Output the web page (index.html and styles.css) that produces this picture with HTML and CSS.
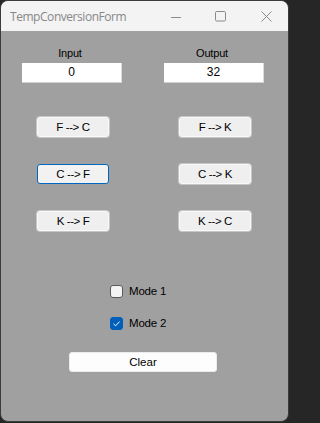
FILE: index.html
```html
<!DOCTYPE html>
<html>
<head>
<meta charset="utf-8">
<title>TempConversionForm</title>
<link rel="stylesheet" href="styles.css">
</head>
<body>
<div class="window">
  <div class="titlebar">
    <span class="title">TempConversionForm</span>
    <div class="caption">
      <svg class="cap-btn" width="46" height="30" viewBox="0 0 46 30"><line x1="21" y1="16.5" x2="31" y2="16.5" stroke="#8a8a8a" stroke-width="1"/></svg>
      <svg class="cap-btn" width="46" height="30" viewBox="0 0 46 30"><rect x="19.5" y="10.5" width="10" height="9.5" rx="1.2" fill="none" stroke="#8a8a8a" stroke-width="1"/></svg>
      <svg class="cap-btn" width="46" height="30" viewBox="0 0 46 30"><path d="M19.5 10.5 L29.5 20.5 M29.5 10.5 L19.5 20.5" stroke="#8a8a8a" stroke-width="1"/></svg>
    </div>
  </div>
  <div class="client">
    <div class="io-row">
      <div class="field">
        <div class="label">Input</div>
        <div class="textbox">0</div>
      </div>
      <div class="field">
        <div class="label">Output</div>
        <div class="textbox">32</div>
      </div>
    </div>
    <div class="btn-grid">
      <button class="btn">F --&gt; C</button>
      <button class="btn">F --&gt; K</button>
      <button class="btn focused">C --&gt; F</button>
      <button class="btn">C --&gt; K</button>
      <button class="btn">K --&gt; F</button>
      <button class="btn">K --&gt; C</button>
    </div>
    <div class="checks">
      <label class="check"><span class="box"></span><span class="check-text">Mode 1</span></label>
      <label class="check"><span class="box checked"><svg width="13" height="13" viewBox="0 0 13 13"><path d="M3.5 6.8 L5.6 8.8 L9.6 4.6" fill="none" stroke="#ffffff" stroke-width="1"/></svg></span><span class="check-text">Mode 2</span></label>
    </div>
    <button class="clear">Clear</button>
  </div>
</div>
</body>
</html>
```

FILE: styles.css
```css
* { box-sizing: border-box; }

html, body {
  margin: 0;
  padding: 0;
  background: #262626;
  width: 290px;
  height: 423px;
  overflow: hidden;
}

.window {
  width: 289px;
  height: 422px;
  border: 1px solid #3a3a3a;
  border-radius: 8px;
  overflow: hidden;
  background: #a0a0a0;
  display: flex;
  flex-direction: column;
}

.titlebar {
  height: 30px;
  background: #f3f3f3;
  display: flex;
  align-items: center;
  justify-content: space-between;
  flex: none;
}

.title {
  font-family: "Open Sans", "Noto Sans", sans-serif;
  font-size: 12px;
  letter-spacing: -0.45px;
  color: #888888;
  padding-left: 9px;
  padding-top: 1px;
}

.caption {
  display: flex;
  height: 30px;
}

.cap-btn {
  display: block;
}

.client {
  flex: 1;
  display: flex;
  flex-direction: column;
  padding-top: 16px;
  font-family: "Liberation Sans", Arial, sans-serif;
  font-size: 11px;
  color: #000000;
}

.io-row {
  display: grid;
  grid-template-columns: 100px 100px;
  column-gap: 42px;
  padding-left: 21px;
}

.field {
  display: flex;
  flex-direction: column;
  align-items: center;
}

.label {
  line-height: 13px;
  height: 13px;
  letter-spacing: -0.2px;
  margin-left: -4px;
}

.textbox {
  margin-top: 3px;
  width: 100px;
  height: 20px;
  background: #ffffff;
  border-right: 1px solid #dcdcdc;
  border-bottom: 1px solid #d0d0d0;
  text-align: center;
  font-size: 12px;
  line-height: 19px;
}

.btn-grid {
  display: grid;
  grid-template-columns: 100px 100px;
  column-gap: 42px;
  row-gap: 27px;
  padding-left: 21px;
  margin-top: 34px;
  justify-items: center;
}

.btn {
  width: 72px;
  height: 20px;
  margin: 0 0 0 2px;
  padding: 0;
  background: #efefef;
  border: 1px solid #f9f9f9;
  border-radius: 3px;
  box-shadow: 0 0 0 1px #c6c6c6;
  font-family: "Liberation Sans", Arial, sans-serif;
  font-size: 11.5px;
  letter-spacing: -0.4px;
  color: #000000;
  line-height: 18px;
}

.btn.focused {
  border: 1px solid #0067c0;
  box-shadow: none;
  background: #f2f2f2;
}

.checks {
  display: flex;
  flex-direction: column;
  gap: 17px;
  margin-top: 53px;
  padding-left: 109px;
}

.check {
  display: flex;
  align-items: center;
  height: 15px;
  gap: 6px;
}

.box {
  width: 13px;
  height: 13px;
  border: 1px solid #5a5a5a;
  border-radius: 3px;
  background: #f4f4f4;
  display: block;
  flex: none;
}

.box.checked {
  background: #005fb8;
  border-color: #005fb8;
  position: relative;
}

.box.checked svg {
  position: absolute;
  left: -1px;
  top: -1px;
}

.check-text {
  font-family: "Liberation Sans", Arial, sans-serif;
  font-size: 11.5px;
  letter-spacing: -0.2px;
  line-height: 15px;
  color: #000000;
}

.clear {
  margin: 21px 0 0 68px;
  width: 148px;
  height: 20px;
  padding: 0;
  background: #fdfdfd;
  border: 1px solid #ececec;
  border-radius: 3px;
  font-family: "Liberation Sans", Arial, sans-serif;
  font-size: 11.5px;
  color: #000000;
  line-height: 18px;
}
```
